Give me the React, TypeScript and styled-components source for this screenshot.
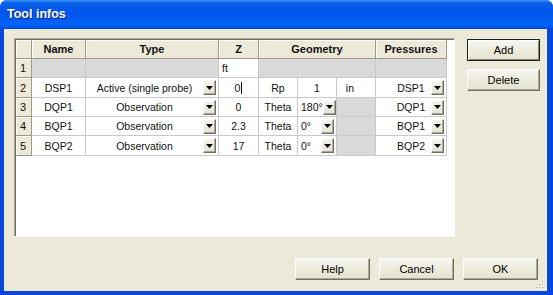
import styled, { createGlobalStyle } from 'styled-components';

interface Probe {
  id: number;
  name: string;
  type: string;
  z: string;
  geometry: { kind: 'rp'; value: string; unit: string } | { kind: 'theta'; angle: string };
  pressure: string;
  editing?: boolean;
}

const probes: Probe[] = [
  { id: 2, name: 'DSP1', type: 'Active (single probe)', z: '0', geometry: { kind: 'rp', value: '1', unit: 'in' }, pressure: 'DSP1', editing: true },
  { id: 3, name: 'DQP1', type: 'Observation', z: '0', geometry: { kind: 'theta', angle: '180°' }, pressure: 'DQP1' },
  { id: 4, name: 'BQP1', type: 'Observation', z: '2.3', geometry: { kind: 'theta', angle: '0°' }, pressure: 'BQP1' },
  { id: 5, name: 'BQP2', type: 'Observation', z: '17', geometry: { kind: 'theta', angle: '0°' }, pressure: 'BQP2' },
];

const GlobalStyle = createGlobalStyle`
  html, body {
    margin: 0;
    padding: 0;
    background: #ffffff;
  }
  * {
    box-sizing: border-box;
  }
`;

const StyledWindow = styled.div`
  width: 553px;
  height: 295px;
  display: flex;
  flex-direction: column;
  background: #0846dc;
  border-radius: 7px 7px 0 0;
  overflow: hidden;
  font-family: "Liberation Sans", Arial, sans-serif;
`;

const StyledTitleBar = styled.div`
  flex: none;
  height: 29px;
  display: flex;
  align-items: center;
  padding: 0 0 1px 7px;
  background: linear-gradient(
    to bottom,
    #3d95ff 0%,
    #0a5fe8 10%,
    #0055ea 45%,
    #0062f7 85%,
    #0058ee 95%,
    #0040d0 100%
  );
`;

const StyledTitle = styled.span`
  color: #ffffff;
  font-size: 12.5px;
  font-weight: bold;
  text-shadow: 1px 1px 0 #0a1e7a;
`;

const StyledClient = styled.div`
  position: relative;
  flex: 1;
  margin: 0 6px 4px 4px;
  padding: 9px 0 0 10px;
  display: flex;
  flex-direction: column;
  background: #ece9d8;
  border-right: 1px solid #f6f5ee;
`;

const StyledMain = styled.div`
  display: flex;
  align-items: flex-start;
`;

const StyledGridPanel = styled.div`
  width: 441px;
  height: 199px;
  background: #ffffff;
  border-top: 1px solid #aca899;
  border-left: 1px solid #aca899;
  border-right: 1px solid #ffffff;
  border-bottom: 1px solid #ffffff;
  box-shadow: inset 1px 1px 0 #716f64;
  padding: 1px 0 0 1px;
`;

const StyledGrid = styled.div`
  display: grid;
  grid-template-columns: 16px 54px 133px 40px 39px 39px 39px 71px;
  grid-template-rows: 19px 19px 20px 19px 19px 20px;
  width: 431px;
  font-size: 10.5px;
  color: #111111;
`;

const StyledHeaderCell = styled.div<{ $span?: number; $bold?: boolean }>`
  grid-column: span ${({ $span }) => $span ?? 1};
  display: flex;
  align-items: center;
  justify-content: ${({ $bold }) => ($bold ? 'center' : 'flex-start')};
  padding-left: ${({ $bold }) => ($bold ? '0' : '4px')};
  background: #ece9d8;
  border-right: 1px solid #9d9a8c;
  border-bottom: 1px solid #9d9a8c;
  box-shadow: inset 1px 1px 0 #ffffff;
  font-weight: ${({ $bold }) => ($bold ? 'bold' : 'normal')};
  font-size: ${({ $bold }) => ($bold ? '11px' : '11px')};
  white-space: nowrap;
`;

const StyledCell = styled.div<{ $span?: number; $muted?: boolean; $align?: 'left' | 'center' }>`
  grid-column: span ${({ $span }) => $span ?? 1};
  display: flex;
  align-items: center;
  padding-left: ${({ $align }) => ($align === 'left' ? '3px' : '0')};
  background: ${({ $muted }) => ($muted ? '#d9d9d9' : '#ffffff')};
  border-right: 1px solid #c9c9c9;
  border-bottom: 1px solid #c9c9c9;
  white-space: nowrap;
  overflow: hidden;
`;

const StyledCellText = styled.span<{ $align?: 'left' | 'center'; $balance?: boolean }>`
  flex: 1;
  display: flex;
  align-items: center;
  justify-content: ${({ $align }) => ($align === 'left' ? 'flex-start' : 'center')};
  padding-left: ${({ $balance }) => ($balance ? '15px' : '0')};
`;

const StyledCaret = styled.span`
  width: 1px;
  height: 12px;
  margin-left: 1px;
  background: #000000;
`;

const StyledDropButton = styled.span`
  flex: none;
  width: 13px;
  height: 15px;
  margin-right: 2px;
  display: flex;
  align-items: center;
  justify-content: center;
  background: linear-gradient(#f4f3ee, #e6e3d3);
  border-top: 1px solid #ffffff;
  border-left: 1px solid #ffffff;
  border-right: 1px solid #716f64;
  border-bottom: 1px solid #716f64;
  box-shadow: inset -1px -1px 0 #aca899;
`;

const StyledSideButtons = styled.div`
  display: flex;
  flex-direction: column;
  gap: 8px;
  margin: 1px 0 0 12px;
`;

const StyledButton = styled.button<{ $default?: boolean; $width?: number }>`
  width: ${({ $width }) => $width ?? 75}px;
  height: 22px;
  padding: 0;
  font-family: "Liberation Sans", Arial, sans-serif;
  font-size: 11px;
  color: #000000;
  background: linear-gradient(#f7f6f1, #ece9d8 60%, #e4e1d1);
  border: 1px solid;
  border-color: ${({ $default }) =>
    $default ? '#1c1c1c' : '#ffffff #716f64 #716f64 #ffffff'};
  box-shadow: ${({ $default }) =>
    $default
      ? 'inset 1px 1px 0 #ffffff, inset -1px -1px 0 #8a877a'
      : 'inset -1px -1px 0 #aca899'};
`;

const StyledFooter = styled.div`
  display: flex;
  justify-content: flex-end;
  gap: 9px;
  margin-top: 21px;
  padding-right: 8px;
`;

const StyledGrip = styled.svg`
  position: absolute;
  right: 1px;
  bottom: 1px;
`;

const DropButton = () => (
  <StyledDropButton>
    <svg width="7" height="4" viewBox="0 0 7 4">
      <polygon points="0,0 7,0 3.5,4" fill="#000" />
    </svg>
  </StyledDropButton>
);

const ProbeRow = ({ probe }: { probe: Probe }) => {
  const { geometry } = probe;

  return (
    <>
      <StyledHeaderCell>{probe.id}</StyledHeaderCell>
      <StyledCell>
        <StyledCellText>{probe.name}</StyledCellText>
      </StyledCell>
      <StyledCell>
        <StyledCellText>{probe.type}</StyledCellText>
        <DropButton />
      </StyledCell>
      <StyledCell>
        <StyledCellText>
          {probe.z}
          {probe.editing && <StyledCaret />}
        </StyledCellText>
      </StyledCell>
      {geometry.kind === 'rp' ? (
        <>
          <StyledCell>
            <StyledCellText>Rp</StyledCellText>
          </StyledCell>
          <StyledCell>
            <StyledCellText>{geometry.value}</StyledCellText>
          </StyledCell>
          <StyledCell $align="left">
            <StyledCellText $align="left">&nbsp;&nbsp;{geometry.unit}</StyledCellText>
          </StyledCell>
        </>
      ) : (
        <>
          <StyledCell>
            <StyledCellText>Theta</StyledCellText>
          </StyledCell>
          <StyledCell $align="left">
            <StyledCellText $align="left">{geometry.angle}</StyledCellText>
            <DropButton />
          </StyledCell>
          <StyledCell $muted />
        </>
      )}
      <StyledCell>
        <StyledCellText $balance>{probe.pressure}</StyledCellText>
        <DropButton />
      </StyledCell>
    </>
  );
};

const App = () => (
  <>
    <GlobalStyle />
    <StyledWindow>
      <StyledTitleBar>
        <StyledTitle>Tool infos</StyledTitle>
      </StyledTitleBar>
      <StyledClient>
        <StyledMain>
          <StyledGridPanel>
            <StyledGrid>
              <StyledHeaderCell />
              <StyledHeaderCell $bold>Name</StyledHeaderCell>
              <StyledHeaderCell $bold>Type</StyledHeaderCell>
              <StyledHeaderCell $bold>Z</StyledHeaderCell>
              <StyledHeaderCell $bold $span={3}>Geometry</StyledHeaderCell>
              <StyledHeaderCell $bold>Pressures</StyledHeaderCell>

              <StyledHeaderCell>1</StyledHeaderCell>
              <StyledCell $muted />
              <StyledCell $muted />
              <StyledCell $align="left">
                <StyledCellText $align="left">ft</StyledCellText>
              </StyledCell>
              <StyledCell $muted $span={3} />
              <StyledCell $muted />

              {probes.map((probe) => (
                <ProbeRow key={probe.id} probe={probe} />
              ))}
            </StyledGrid>
          </StyledGridPanel>
          <StyledSideButtons>
            <StyledButton $default $width={73}>Add</StyledButton>
            <StyledButton $width={73}>Delete</StyledButton>
          </StyledSideButtons>
        </StyledMain>
        <StyledFooter>
          <StyledButton>Help</StyledButton>
          <StyledButton>Cancel</StyledButton>
          <StyledButton>OK</StyledButton>
        </StyledFooter>
        <StyledGrip width="10" height="10" viewBox="0 0 10 10">
          {[[8, 2], [8, 5], [5, 5], [8, 8], [5, 8], [2, 8]].map(([x, y]) => (
            <g key={`${x}-${y}`}>
              <rect x={x} y={y} width="1" height="1" fill="#ffffff" />
              <rect x={x - 1} y={y - 1} width="1" height="1" fill="#aca899" />
            </g>
          ))}
        </StyledGrip>
      </StyledClient>
    </StyledWindow>
  </>
);

export default App;
